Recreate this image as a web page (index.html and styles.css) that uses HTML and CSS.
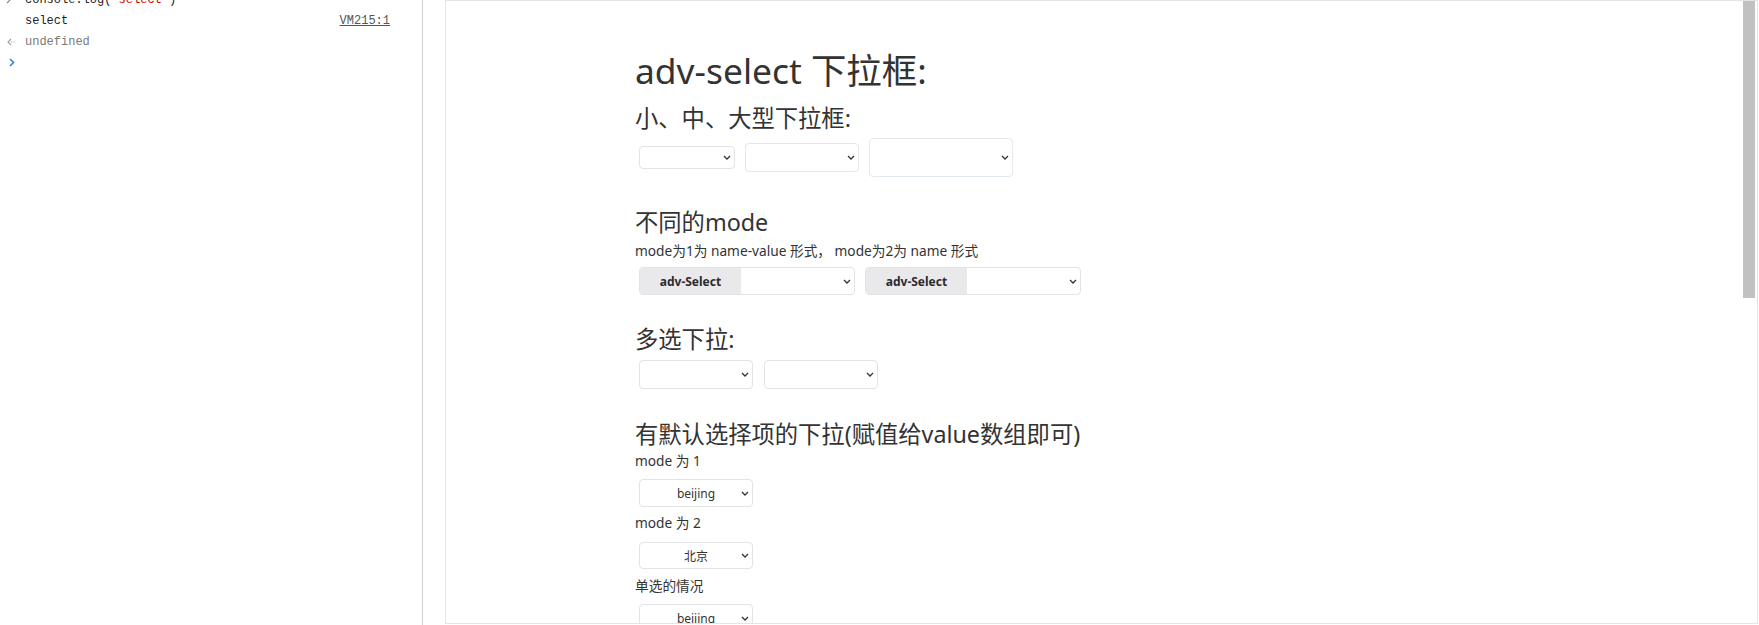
FILE: index.html
```html
<!DOCTYPE html>
<html lang="zh-CN">
<head>
<meta charset="utf-8">
<title>adv-select</title>
<link rel="stylesheet" href="styles.css">
</head>
<body>
<div class="app">
  <aside class="console">
    <div class="row row-1">
      <span class="ico"><svg width="6" height="8" viewBox="0 0 6 8"><path d="M1 1 L4 4 L1 7" fill="none" stroke="#8a8a8a" stroke-width="1.2"/></svg></span>
      <span class="code">console.log(<span class="str">'select'</span>)</span>
    </div>
    <div class="row row-2">
      <span class="ico"></span>
      <span class="code">select</span>
      <span class="src">VM215:1</span>
    </div>
    <div class="row row-3">
      <span class="ico"><svg width="9" height="8" viewBox="0 0 9 8"><path d="M4 1 L1 4 L4 7" fill="none" stroke="#a0a0a0" stroke-width="1.1"/><path d="M4 4 H5 M6.5 4 H7.5" stroke="#a0a0a0" stroke-width="1.1"/></svg></span>
      <span class="code muted">undefined</span>
    </div>
    <div class="row row-4">
      <span class="ico"><svg width="6" height="9" viewBox="0 0 6 9"><path d="M1 1 L4.5 4.5 L1 8" fill="none" stroke="#367cf1" stroke-width="1.6"/></svg></span>
    </div>
  </aside>
  <main class="pane">
    <div class="frame">
      <div class="tabgap"></div>
      <div class="scrollbar"><div class="thumb"></div></div>
      <div class="content">
        <h1 class="h1">adv-select 下拉框:</h1>
        <h3 class="h3 h3-a">小、中、大型下拉框:</h3>
        <div class="line line-sizes">
          <div class="sel sel-sm"><span class="sp"></span><span class="val"></span><svg class="chev" width="8" height="5" viewBox="0 0 8 5"><path d="M1 1 L4 4 L7 1" fill="none" stroke="#333" stroke-width="1.3"/></svg></div>
          <div class="sel sel-md"><span class="sp"></span><span class="val"></span><svg class="chev" width="8" height="5" viewBox="0 0 8 5"><path d="M1 1 L4 4 L7 1" fill="none" stroke="#333" stroke-width="1.3"/></svg></div>
          <div class="sel sel-lg"><span class="sp"></span><span class="val"></span><svg class="chev" width="8" height="5" viewBox="0 0 8 5"><path d="M1 1 L4 4 L7 1" fill="none" stroke="#333" stroke-width="1.3"/></svg></div>
        </div>

        <h3 class="h3 h3-b">不同的mode</h3>
        <p class="txt txt-p">mode为1为 name-value 形式， mode为2为 name 形式</p>
        <div class="line line-groups">
          <div class="group">
            <span class="addon">adv-Select</span>
            <div class="gsel"><svg class="chev" width="8" height="5" viewBox="0 0 8 5"><path d="M1 1 L4 4 L7 1" fill="none" stroke="#333" stroke-width="1.3"/></svg></div>
          </div>
          <div class="group">
            <span class="addon">adv-Select</span>
            <div class="gsel"><svg class="chev" width="8" height="5" viewBox="0 0 8 5"><path d="M1 1 L4 4 L7 1" fill="none" stroke="#333" stroke-width="1.3"/></svg></div>
          </div>
        </div>

        <h3 class="h3 h3-c">多选下拉:</h3>
        <div class="line line-multi">
          <div class="sel sel-w"><span class="sp"></span><span class="val"></span><svg class="chev" width="8" height="5" viewBox="0 0 8 5"><path d="M1 1 L4 4 L7 1" fill="none" stroke="#333" stroke-width="1.3"/></svg></div>
          <div class="sel sel-w"><span class="sp"></span><span class="val"></span><svg class="chev" width="8" height="5" viewBox="0 0 8 5"><path d="M1 1 L4 4 L7 1" fill="none" stroke="#333" stroke-width="1.3"/></svg></div>
        </div>

        <h3 class="h3 h3-d">有默认选择项的下拉<span class="pn">(</span>赋值给value数组即可<span class="pn">)</span></h3>
        <div class="txt lab lab-1">mode 为 1</div>
        <div class="line line-d1">
          <div class="sel sel-w"><span class="sp"></span><span class="val">beijing</span><svg class="chev" width="8" height="5" viewBox="0 0 8 5"><path d="M1 1 L4 4 L7 1" fill="none" stroke="#333" stroke-width="1.3"/></svg></div>
        </div>
        <div class="txt lab lab-2">mode 为 2</div>
        <div class="line line-d2">
          <div class="sel sel-w sel-27"><span class="sp"></span><span class="val">北京</span><svg class="chev" width="8" height="5" viewBox="0 0 8 5"><path d="M1 1 L4 4 L7 1" fill="none" stroke="#333" stroke-width="1.3"/></svg></div>
        </div>
        <div class="txt lab lab-3">单选的情况</div>
        <div class="line line-d3">
          <div class="sel sel-w"><span class="sp"></span><span class="val">beijing</span><svg class="chev" width="8" height="5" viewBox="0 0 8 5"><path d="M1 1 L4 4 L7 1" fill="none" stroke="#333" stroke-width="1.3"/></svg></div>
        </div>
      </div>
    </div>
  </main>
</div>
</body>
</html>
```

FILE: styles.css
```css
* { box-sizing: border-box; }
html, body { margin: 0; padding: 0; background: #fff; }
body { width: 1759px; height: 625px; overflow: hidden; }

.app { display: flex; height: 625px; }

/* console panel */
.console {
  width: 423px;
  flex: none;
  border-right: 1px solid #cbcdd1;
  font-family: "Liberation Mono", "DejaVu Sans Mono", monospace;
  font-size: 12px;
  color: #222;
  padding-right: 32px;
}
.row { display: flex; align-items: center; height: 21px; }
.row-1 { margin-top: -11px; }
.row-4 { height: 20px; }
.ico { width: 25px; flex: none; display: flex; align-items: center; padding-left: 7px; }
.row-1 .ico { padding-left: 6px; }
.row-4 .ico { padding-left: 9px; }
.code { white-space: pre; }
.str { color: #c80000; }
.muted { color: #7a7a7a; }
.src { margin-left: auto; color: #555; text-decoration: underline; }

/* right pane */
.pane { flex: 1; padding-left: 22px; padding-right: 1px; }
.frame {
  position: relative;
  height: 624px;
  border: 1px solid #e4e4e4;
  background: #fff;
  overflow: hidden;
}
.tabgap { position: absolute; left: 105px; top: -1px; width: 96px; height: 1px; background: #fff; z-index: 3; }
.scrollbar { position: absolute; top: -1px; right: 0; width: 16px; height: 625px; background: #fff; z-index: 2; }
.thumb { margin-left: 2px; width: 12px; height: 298px; background: #c1c1c1; }

.content {
  padding-left: 189px;
  color: #333;
  font-family: "Noto Sans", "Noto Sans CJK SC", sans-serif;
}
.h1 { margin: 49px 0 0; font-size: 35.4px; font-weight: 400; line-height: 40px; height: 40px; }
.h3 { margin: 0; font-size: 23.3px; font-weight: 400; line-height: 28px; height: 28px; white-space: nowrap; }
.pn { font-family: "Noto Sans", sans-serif; }
.h3-a { margin-top: 14px; }
.h3-b { margin-top: 31px; }
.h3-c { margin-top: 30px; }
.h3-d { margin-top: 31px; }
.txt { margin: 0; font-size: 13.7px; line-height: 20px; height: 20px; white-space: nowrap; }
.txt-p { margin-top: 5px; }
.lab-1 { margin-top: 3px; }
.lab-2 { margin-top: 6px; }
.lab-3 { margin-top: 7px; }

.line { display: flex; align-items: center; padding-left: 4px; }
.line-sizes { margin-top: 6px; height: 39px; gap: 10px; }
.line-groups { margin-top: 6px; gap: 10px; }
.line-multi { margin-top: 7px; gap: 11px; }
.line-d1 { margin-top: 8px; }
.line-d2 { margin-top: 9px; }
.line-d3 { margin-top: 8px; }

.sel {
  display: flex;
  align-items: center;
  border: 1px solid #e1e3e7;
  border-radius: 4px;
  background: #fff;
  padding: 0 3px;
  font-size: 12px;
  color: #333;
}
.sp { width: 8px; flex: none; }
.val { flex: 1; text-align: center; white-space: nowrap; }
.chev { flex: none; display: block; }
.sel-sm { width: 96px; height: 23px; }
.sel-md { width: 114px; height: 29px; border-color: #e2e8ee; }
.sel-lg { width: 144px; height: 39px; border-color: #e2e9ef; }
.sel-w { width: 114px; height: 29px; }
.line-d1 .sel-w, .line-d3 .sel-w { height: 28px; }
.sel-27 { height: 27px; }

.group {
  display: flex;
  width: 216px;
  height: 28px;
  border: 1px solid #e1e3e7;
  border-radius: 4px;
  overflow: hidden;
  background: #fff;
}
.addon {
  width: 101px;
  flex: none;
  background: #e9e9ec;
  display: flex;
  align-items: center;
  justify-content: center;
  font-size: 12px;
  font-weight: 700;
  color: #2b2b2b;
}
.gsel { flex: 1; display: flex; align-items: center; justify-content: flex-end; padding-right: 3px; }
```
